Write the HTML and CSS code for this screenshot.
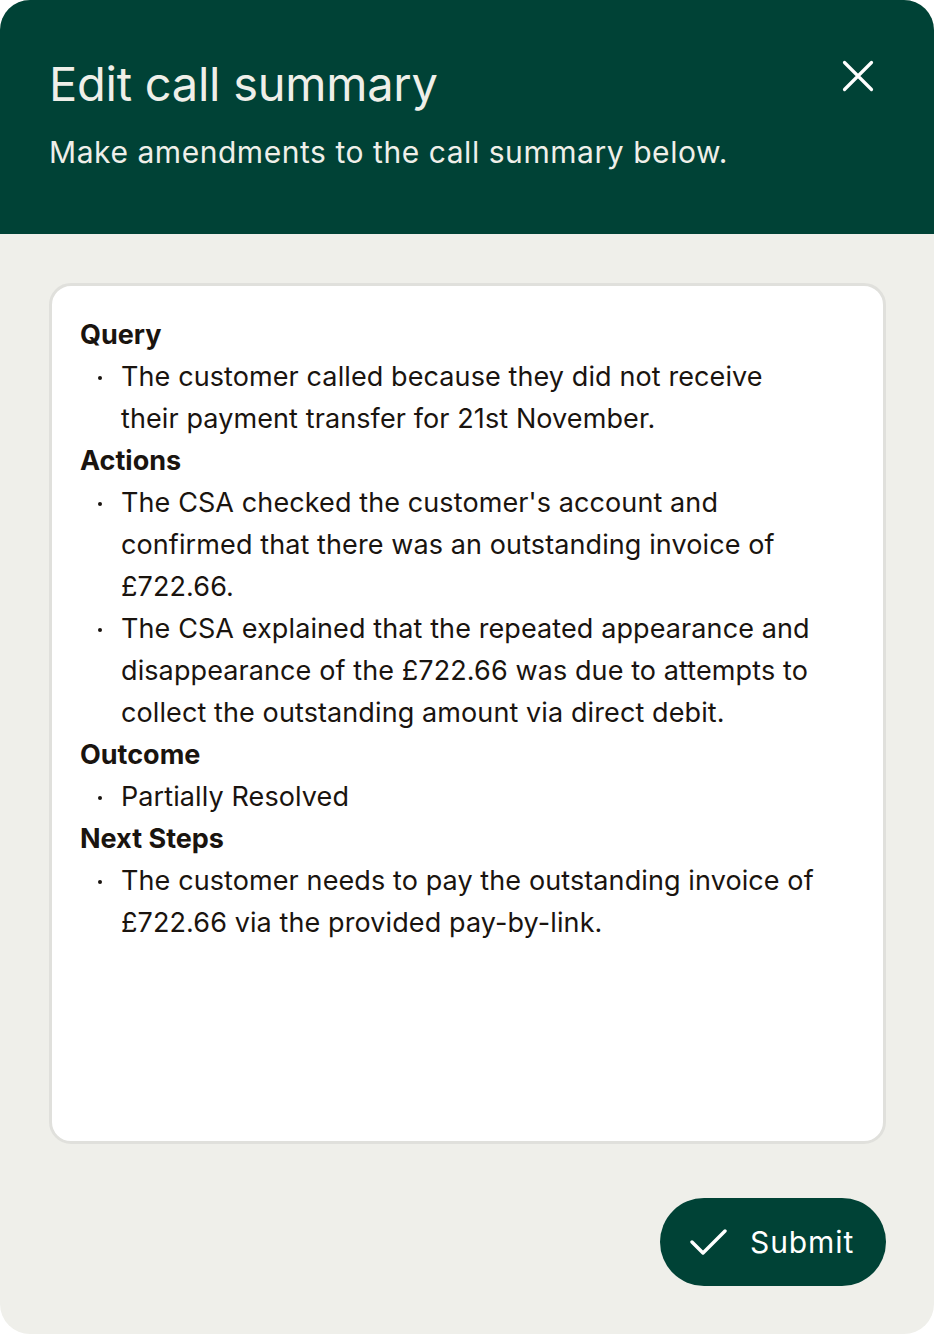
FILE: index.html
```html
<!DOCTYPE html>
<html lang="en">
<head>
<meta charset="utf-8">
<title>Edit call summary</title>
<link rel="stylesheet" href="styles.css">
</head>
<body>
<div class="dialog">
  <header class="dialog-header">
    <div class="header-text">
      <h1 class="title">Edit call summary</h1>
      <p class="subtitle">Make amendments to the call summary below.</p>
    </div>
    <button class="close" aria-label="Close">
      <svg width="32" height="32" viewBox="0 0 32 32"><path d="M2.5 2.5 L29.5 29.5 M29.5 2.5 L2.5 29.5" stroke="#ffffff" stroke-width="3.2" stroke-linecap="round" fill="none"/></svg>
    </button>
  </header>
  <main class="dialog-body">
    <div class="card">
      <h2 class="section">Query</h2>
      <ul class="items">
        <li>The customer called because they did not receive<br>their payment transfer for 21st November.</li>
      </ul>
      <h2 class="section">Actions</h2>
      <ul class="items">
        <li>The CSA checked the customer's account and<br>confirmed that there was an outstanding invoice of<br>£722.66.</li>
        <li>The CSA explained that the repeated appearance and<br>disappearance of the £722.66 was due to attempts to<br>collect the outstanding amount via direct debit.</li>
      </ul>
      <h2 class="section">Outcome</h2>
      <ul class="items">
        <li>Partially Resolved</li>
      </ul>
      <h2 class="section">Next Steps</h2>
      <ul class="items">
        <li>The customer needs to pay the outstanding invoice of<br>£722.66 via the provided pay-by-link.</li>
      </ul>
    </div>
    <div class="actions">
      <button class="submit">
        <svg width="38" height="30" viewBox="0 0 38 30"><path d="M2 15 L13 26 L35 4" stroke="#ffffff" stroke-width="3.4" stroke-linecap="round" stroke-linejoin="round" fill="none"/></svg>
        <span>Submit</span>
      </button>
    </div>
  </main>
</div>
</body>
</html>
```
FILE: styles.css
```css
* { box-sizing: border-box; }
html, body { margin: 0; padding: 0; background: #ffffff; }
body {
  font-family: Inter, "Noto Sans", sans-serif;
  color: #1a140f;
}
.dialog {
  width: 934px;
  height: 1334px;
  border-radius: 30px;
  overflow: hidden;
  background: #efefea;
  display: flex;
  flex-direction: column;
}
.dialog-header {
  background: #004236;
  height: 234px;
  padding: 54px 60px 0 49px;
  display: flex;
  justify-content: space-between;
  align-items: flex-start;
  color: #efefe9;
}
.title {
  margin: 0;
  font-weight: 400;
  font-size: 47px;
  line-height: 60px;
  letter-spacing: -0.25px;
}
.subtitle {
  margin: 18px 0 0;
  font-size: 30px;
  line-height: 40px;
  font-weight: 400;
  letter-spacing: 0.55px;
}
.close {
  background: none;
  border: 0;
  padding: 0;
  margin-top: 6px;
  width: 32px;
  height: 32px;
  cursor: pointer;
}
.close svg { display: block; }
.dialog-body {
  flex: 1;
  padding: 49px 48px 48px 49px;
  display: flex;
  flex-direction: column;
}
.card {
  height: 861px;
  background: #ffffff;
  border: 3px solid #e0e0dc;
  border-radius: 22px;
  padding: 28px 28px;
}
.section {
  margin: 0;
  font-size: 27px;
  line-height: 42px;
  font-weight: 700;
  letter-spacing: 0;
}
.items {
  margin: 0;
  padding: 0 0 0 41px;
  list-style: none;
}
.items li {
  position: relative;
  font-size: 27px;
  line-height: 42px;
  letter-spacing: 0.1px;
}
.items li::before {
  content: "";
  position: absolute;
  left: -23px;
  top: 20px;
  width: 4px;
  height: 4px;
  border-radius: 50%;
  background: #1a140f;
}
.actions {
  margin-top: auto;
  display: flex;
  justify-content: flex-end;
}
.submit {
  height: 88px;
  width: 226px;
  border: 0;
  border-radius: 44px;
  background: #004236;
  color: #ffffff;
  display: flex;
  align-items: center;
  gap: 22px;
  padding: 0 0 0 30px;
  font-family: inherit;
  font-size: 30px;
  letter-spacing: 0.9px;
  cursor: pointer;
}
.submit svg { display: block; }
```
